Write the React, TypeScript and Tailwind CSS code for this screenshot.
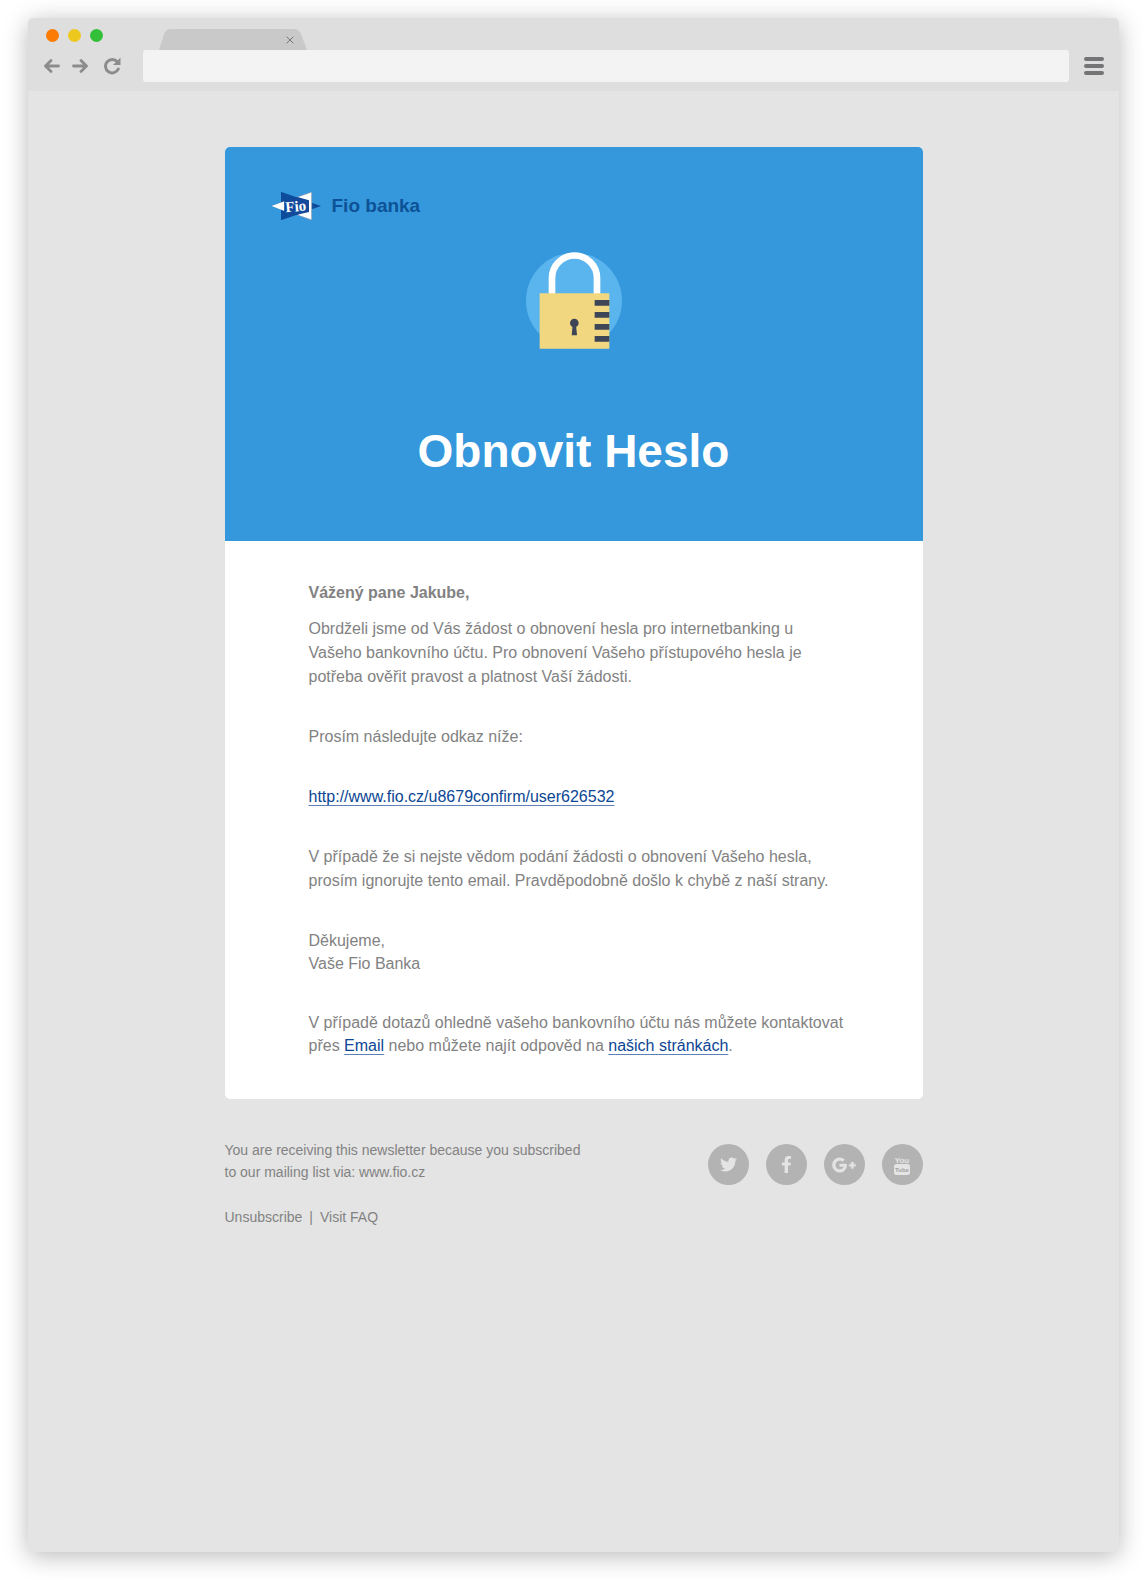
import type { ReactNode } from "react";
import { FaFacebookF, FaGooglePlusG, FaTwitter } from "react-icons/fa";

function TrafficLights() {
  return (
    <div className="mt-0.5 flex items-center gap-[9px]">
      <button type="button" aria-label="Close window" className="size-[13px] rounded-full bg-[#fb7b04]" />
      <button type="button" aria-label="Minimize window" className="size-[13px] rounded-full bg-[#eec81f]" />
      <button type="button" aria-label="Maximize window" className="size-[13px] rounded-full bg-[#33bf38]" />
    </div>
  );
}

function Tab() {
  return (
    <div className="relative ml-14 flex h-[21px] w-[148px] items-center justify-end self-end pr-[13px]">
      <svg viewBox="0 0 148 21" preserveAspectRatio="none" aria-hidden="true" className="absolute inset-0 size-full">
        <path d="M0 21 5 5Q7 0 12 0H135Q140 0 142 5L148 21Z" fill="#c9c9c9" />
      </svg>
      <button type="button" aria-label="Close tab" className="relative">
        <svg viewBox="0 0 8 8" className="size-2" stroke="#777" strokeWidth="1" fill="none">
          <path d="M.7.7 7.3 7.3M7.3.7.7 7.3" />
        </svg>
      </button>
    </div>
  );
}

function BrowserBar() {
  return (
    <header className="rounded-t-[5px] bg-[#dedede] pb-[9px]">
      <div className="flex h-8 items-center pl-[18px]">
        <TrafficLights />
        <Tab />
      </div>
      <div className="flex h-8 items-center pl-4 pr-[15px]">
        <button type="button" aria-label="Back">
          <svg viewBox="0 0 16 14" className="h-[14px] w-4" fill="none" stroke="#8c8c8c" strokeWidth="2.8" strokeLinecap="round" strokeLinejoin="round">
            <path d="M7 1.5 1.5 7 7 12.5M2 7H14.5" />
          </svg>
        </button>
        <button type="button" aria-label="Forward" className="ml-3">
          <svg viewBox="0 0 16 14" className="h-[14px] w-4" fill="none" stroke="#8c8c8c" strokeWidth="2.8" strokeLinecap="round" strokeLinejoin="round">
            <path d="M9 1.5 14.5 7 9 12.5M14 7H1.5" />
          </svg>
        </button>
        <button type="button" aria-label="Reload" className="ml-4">
          <svg viewBox="0 0 17 18" className="h-[18px] w-[17px]">
            <path d="M13.4 5A6.7 6.7 0 1 0 14.3 12" fill="none" stroke="#8c8c8c" strokeWidth="3" strokeLinecap="round" />
            <path d="M16.5.5V8H9Z" fill="#8c8c8c" />
          </svg>
        </button>
        <input
          type="text"
          aria-label="Address"
          className="ml-[22px] h-8 min-w-0 flex-1 rounded-[3px] bg-[#f3f3f3] px-3 font-['Liberation_Sans',sans-serif] text-sm text-[#828282] outline-none"
        />
        <button type="button" aria-label="Menu" className="ml-[15px] flex w-5 flex-col gap-[3px]">
          <span className="h-1 w-full rounded-[2px] bg-[#747476]" />
          <span className="h-1 w-full rounded-[2px] bg-[#747476]" />
          <span className="h-1 w-full rounded-[2px] bg-[#747476]" />
        </button>
      </div>
    </header>
  );
}

function FioLogo() {
  return (
    <div className="flex items-center gap-[11px]">
      <svg viewBox="0 0 147 84" className="h-7 w-[49px]" aria-hidden="true">
        <path d="M27 0 147 42 27 84Z" fill="#0d4c9b" />
        <path d="M119 0 0 42 119 84Z" fill="#fff" stroke="#7d93ad" strokeWidth="2" />
        <path d="M27 0 82 19 38 33V54L82 66 27 84V0Z" fill="#0d4c9b" />
        <path d="M0 42 37 28V57Z" fill="#fff" />
        <path d="M37 28 76 15 111 25V60L72 69 37 58Z" fill="#12499a" />
        <text x="40" y="58" transform="rotate(-5 72 42)" fill="#fff" fontSize="45" fontWeight="700" fontFamily="'Liberation Serif', serif">
          Fio
        </text>
      </svg>
      <span className="text-[19px] leading-7 font-bold text-[#0d5296]">Fio banka</span>
    </div>
  );
}

function Padlock() {
  return (
    <svg viewBox="0 0 288 291" className="h-[97px] w-24" aria-hidden="true">
      <circle cx="144" cy="146" r="144" fill="#5ab5ee" />
      <path d="M78 130V78a67.5 67.5 0 0 1 135 0V130" fill="none" stroke="#fff" strokeWidth="20" />
      <path d="M41 124H250V290H41Z" fill="#f1d77f" />
      <path d="M206 144h44v17h-44ZM206 180h44v17h-44ZM206 216h44v17h-44ZM206 252h44v17h-44Z" fill="#3d4556" />
      <circle cx="145" cy="213" r="13" fill="#3d4556" />
      <path d="M140 218h10l3 32h-16Z" fill="#3d4556" />
    </svg>
  );
}

function YouTubeGlyph() {
  return (
    <svg viewBox="0 0 16 20" className="h-5 w-4" aria-hidden="true">
      <text x="8" y="8" textAnchor="middle" fill="#e4e4e4" fontSize="8" fontWeight="700" fontFamily="'Liberation Sans Narrow', 'Liberation Sans', sans-serif">
        You
      </text>
      <rect x="0" y="9" width="16" height="11" rx="2.5" fill="#e4e4e4" />
      <text x="8" y="17" textAnchor="middle" fill="#a3a3a3" fontSize="6" fontWeight="700" fontFamily="'Liberation Sans Narrow', 'Liberation Sans', sans-serif">
        Tube
      </text>
    </svg>
  );
}

function SocialLink({ label, children }: { label: string; children: ReactNode }) {
  return (
    <a href="#" aria-label={label} className="flex size-[41px] items-center justify-center rounded-full bg-[#b3b3b3] text-[#e4e4e4]">
      {children}
    </a>
  );
}

function TextLink({ href, children }: { href: string; children: ReactNode }) {
  return (
    <a href={href} className="text-[#0c4694] underline decoration-[#5f7fb8] decoration-1 underline-offset-3">
      {children}
    </a>
  );
}

function Message() {
  return (
    <article className="overflow-hidden rounded-[5px] bg-white">
      <div className="flex flex-col bg-[#3598dc] px-[47px] pt-[45px] pb-[62px]">
        <FioLogo />
        <div className="mt-8 flex justify-center">
          <Padlock />
        </div>
        <h1 className="mt-[74px] text-center text-[46px] leading-[56px] font-bold text-white">Obnovit Heslo</h1>
      </div>
      <div className="pt-10 pr-[60px] pb-[42px] pl-[84px] text-base leading-6 text-[#828282]">
        <p className="font-bold">Vážený pane Jakube,</p>
        <p className="mt-3">
          Obrdželi jsme od Vás žádost o obnovení hesla pro internetbanking u
          <br />
          Vašeho bankovního účtu. Pro obnovení Vašeho přístupového hesla je
          <br />
          potřeba ověřit pravost a platnost Vaší žádosti.
        </p>
        <p className="mt-9">Prosím následujte odkaz níže:</p>
        <p className="mt-9">
          <TextLink href="http://www.fio.cz/u8679confirm/user626532">http://www.fio.cz/u8679confirm/user626532</TextLink>
        </p>
        <p className="mt-9">
          V případě že si nejste vědom podání žádosti o obnovení Vašeho hesla,
          <br />
          prosím ignorujte tento email. Pravděpodobně došlo k chybě z naší strany.
        </p>
        <p className="mt-9 leading-[23px]">
          Děkujeme,
          <br />
          Vaše Fio Banka
        </p>
        <p className="mt-9 leading-[23px]">
          V případě dotazů ohledně vašeho bankovního účtu nás můžete kontaktovat
          <br />
          přes <TextLink href="#">Email</TextLink> nebo můžete najít odpověd na <TextLink href="#">našich stránkách</TextLink>.
        </p>
      </div>
    </article>
  );
}

function Footer() {
  return (
    <footer className="flex items-start justify-between pt-10">
      <div className="text-sm leading-[22px] text-[#828282]">
        <p>
          You are receiving this newsletter because you subscribed
          <br />
          to our mailing list via: www.fio.cz
        </p>
        <p className="mt-[23px] flex gap-[7px]">
          <a href="#">Unsubscribe</a>
          <span>|</span>
          <a href="#">Visit FAQ</a>
        </p>
      </div>
      <div className="mt-[5px] flex gap-[17px]">
        <SocialLink label="Twitter">
          <FaTwitter size={17} />
        </SocialLink>
        <SocialLink label="Facebook">
          <FaFacebookF size={17} />
        </SocialLink>
        <SocialLink label="Google Plus">
          <FaGooglePlusG size={24} stroke="currentColor" strokeWidth={12} />
        </SocialLink>
        <SocialLink label="YouTube">
          <YouTubeGlyph />
        </SocialLink>
      </div>
    </footer>
  );
}

export default function App() {
  return (
    <div className="flex min-h-screen flex-col bg-white px-7 pt-[18px] pb-7 font-['Liberation_Sans',Arial,sans-serif]">
      <div className="flex flex-1 flex-col rounded-[6px] bg-[#e4e4e4] shadow-[0_4px_24px_rgba(0,0,0,0.28)]">
        <BrowserBar />
        <main className="mx-auto w-full max-w-[698px] pt-14 pb-14">
          <Message />
          <Footer />
        </main>
      </div>
    </div>
  );
}
